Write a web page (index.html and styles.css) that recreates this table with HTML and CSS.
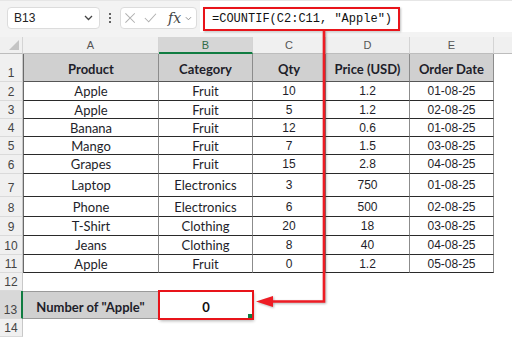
FILE: index.html
```html
<!DOCTYPE html>
<html>
<head>
<meta charset="utf-8">
<link rel="stylesheet" href="styles.css">
</head>
<body>
<div class="page">
  <div class="bar">
    <div class="namebox">
      <span class="ref">B13</span>
      <svg class="chev" width="9" height="6" viewBox="0 0 9 6"><path d="M1 1 L4.5 4.5 L8 1" fill="none" stroke="#444" stroke-width="1.3"/></svg>
    </div>
    <div class="dots"><i></i><i></i><i></i></div>
    <div class="fxbox">
      <svg class="xic" width="12" height="12" viewBox="0 0 12 12"><path d="M0.5 0.5 L11.5 11.5 M11.5 0.5 L0.5 11.5" stroke="#b0b0b0" stroke-width="1.2" fill="none"/></svg>
      <svg width="15" height="12" viewBox="0 0 15 12"><path d="M1 6 L5.5 10.5 L14 1" stroke="#b0b0b0" stroke-width="1.2" fill="none"/></svg>
      <span class="fx">fx</span>
      <svg class="chev2" width="8" height="5" viewBox="0 0 8 5"><path d="M1 1 L4 4 L7 1" fill="none" stroke="#888" stroke-width="1.1"/></svg>
    </div>
    <div class="finput"><div class="formula">=COUNTIF(C2:C11, "Apple")</div></div>
  </div>

  <div class="sheet">
    <div class="corner"></div>
    <div class="ch">A</div><div class="ch sel">B</div><div class="ch">C</div><div class="ch">D</div><div class="ch">E</div><div class="ch last"></div>

    <div class="rh">1</div>
    <div class="c h a">Product</div><div class="c h">Category</div><div class="c h">Qty</div><div class="c h">Price (USD)</div><div class="c h">Order Date</div><div class="e"></div>

    <div class="rh">2</div>
    <div class="c a">Apple</div><div class="c">Fruit</div><div class="c n">10</div><div class="c n">1.2</div><div class="c n">01-08-25</div><div class="e"></div>
    <div class="rh">3</div>
    <div class="c a">Apple</div><div class="c">Fruit</div><div class="c n">5</div><div class="c n">1.2</div><div class="c n">02-08-25</div><div class="e"></div>
    <div class="rh">4</div>
    <div class="c a">Banana</div><div class="c">Fruit</div><div class="c n">12</div><div class="c n">0.6</div><div class="c n">01-08-25</div><div class="e"></div>
    <div class="rh">5</div>
    <div class="c a">Mango</div><div class="c">Fruit</div><div class="c n">7</div><div class="c n">1.5</div><div class="c n">03-08-25</div><div class="e"></div>
    <div class="rh">6</div>
    <div class="c a">Grapes</div><div class="c">Fruit</div><div class="c n">15</div><div class="c n">2.8</div><div class="c n">04-08-25</div><div class="e"></div>
    <div class="rh">7</div>
    <div class="c a">Laptop</div><div class="c">Electronics</div><div class="c n">3</div><div class="c n">750</div><div class="c n">01-08-25</div><div class="e"></div>
    <div class="rh">8</div>
    <div class="c a">Phone</div><div class="c">Electronics</div><div class="c n">6</div><div class="c n">500</div><div class="c n">02-08-25</div><div class="e"></div>
    <div class="rh">9</div>
    <div class="c a">T-Shirt</div><div class="c">Clothing</div><div class="c n">20</div><div class="c n">18</div><div class="c n">03-08-25</div><div class="e"></div>
    <div class="rh">10</div>
    <div class="c a">Jeans</div><div class="c">Clothing</div><div class="c n">8</div><div class="c n">40</div><div class="c n">04-08-25</div><div class="e"></div>
    <div class="rh">11</div>
    <div class="c a">Apple</div><div class="c">Fruit</div><div class="c n">0</div><div class="c n">1.2</div><div class="c n">05-08-25</div><div class="e"></div>

    <div class="rh">12</div>
    <div class="e"></div><div class="e"></div><div class="e"></div><div class="e"></div><div class="e"></div><div class="e"></div>

    <div class="rh act">13</div>
    <div class="lbl">Number of "Apple"</div><div class="res">0<span class="handle"></span></div><div class="e"></div><div class="e"></div><div class="e"></div><div class="e"></div>

    <div class="rh">14</div>
    <div class="e"></div><div class="e"></div><div class="e"></div><div class="e"></div><div class="e"></div><div class="e"></div>
  </div>

  <svg class="arrow" width="512" height="338" viewBox="0 0 512 338">
    <polyline points="324,31 324,301.5 270,301.5" fill="none" stroke="#ee1c24" stroke-width="2.6"/>
    <polygon points="256,301.5 273,296 273,307" fill="#ee1c24"/>
  </svg>
</div>
</body>
</html>
```

FILE: styles.css
```css
* { box-sizing: border-box; }
html, body { margin: 0; padding: 0; background: #fff; }
body { width: 512px; height: 338px; overflow: hidden; font-family: "Liberation Sans", Arial, sans-serif; }
.page { position: relative; width: 512px; height: 338px; }

.bar {
  display: flex;
  align-items: flex-start;
  height: 37px;
  background: #f3f3f3;
  border-top: 1px solid #e6e6e6;
}
.namebox {
  margin: 6px 0 0 7px;
  width: 93px;
  height: 22px;
  background: #fff;
  border: 1px solid #dcdcdc;
  border-radius: 4px;
  display: flex;
  align-items: center;
  justify-content: space-between;
  padding: 0 6px 0 6px;
}
.ref { font-size: 12px; color: #222; }
.dots {
  width: 20px;
  height: 22px;
  margin-top: 6px;
  display: flex;
  flex-direction: column;
  align-items: center;
  justify-content: center;
  gap: 2px;
}
.dots i { display: block; width: 2px; height: 2px; background: #333; border-radius: 1px; }
.fxbox {
  margin-top: 6px;
  width: 77px;
  height: 22px;
  background: #fff;
  border: 1px solid #dcdcdc;
  border-radius: 4px;
  display: flex;
  align-items: center;
  padding: 0 4px 0 4px;
  gap: 6px;
}
.xic { margin-right: 3px; }
.fx {
  font-family: "DejaVu Serif", "Liberation Serif", serif;
  font-style: italic;
  font-size: 14px;
  color: #444;
  margin-left: 5px;
  line-height: 1;
}
.chev2 { margin-left: -2px; }
.finput {
  flex: 1;
  margin-left: 3px;
  height: 31px;
  background: #fff;
  padding: 6px 0 0 3px;
}
.formula {
  width: 197px;
  height: 24px;
  border: 2px solid #e8141a;
  box-shadow: 1px 1px 2px rgba(0,0,0,0.25);
  padding-left: 7px;
  font-family: "Liberation Mono", "DejaVu Sans Mono", monospace;
  font-size: 12px;
  line-height: 20px;
  color: #111;
  white-space: nowrap;
}

.sheet {
  display: grid;
  grid-template-columns: 23px 136px 94px 73px 84px 84px 18px;
  grid-template-rows: 17px 28px 19px 18px 18px 18px 19px 23px 20px 19px 19px 18px 18px 28px 18px;
}
.corner {
  background: #f0f0f0;
  border-right: 1px solid #d4d4d4;
  border-bottom: 1px solid #bdbdbd;
  position: relative;
}
.corner::after {
  content: "";
  position: absolute;
  right: 3px;
  bottom: 3px;
  border-left: 10px solid transparent;
  border-bottom: 10px solid #c4c4c4;
}
.ch {
  background: #f0f0f0;
  border-right: 1px solid #d4d4d4;
  border-bottom: 1px solid #bdbdbd;
  font-size: 11px;
  color: #555;
  display: flex;
  align-items: center;
  justify-content: center;
}
.ch.sel {
  background: #d6d6d6;
  border-bottom: 2px solid #107c41;
  color: #2f6b48;
}
.ch.last { border-right: none; }
.rh {
  background: #f0f0f0;
  border-right: 1px solid #c8c8c8;
  border-bottom: 1px solid #dadada;
  font-size: 12px;
  color: #444;
  display: flex;
  align-items: flex-end;
  justify-content: center;
  padding-bottom: 1px;
  line-height: 14px;
}
.rh.act {
  background: #d8d8d8;
  border-right: 2px solid #107c41;
}
.c {
  border-right: 1px solid #8c8c8c;
  border-bottom: 1px solid #2a2a2a;
  display: flex;
  align-items: center;
  justify-content: center;
  font-family: Lato, "Liberation Sans", sans-serif;
  font-size: 13px;
  color: #1e1e2a;
  white-space: nowrap;
}
.c.a { border-left: 1px solid #6a6a6a; }
.c.n { font-family: "Liberation Sans", Arial, sans-serif; font-size: 12px; }
.c.h {
  background: #d0d0d0;
  font-weight: 700;
  font-family: Lato, "Liberation Sans", sans-serif;
  font-size: 13px;
  border-bottom: 1px solid #555;
  padding-top: 2px;
}
.e { background: #fff; }
.lbl {
  background: #d0d0d0;
  border-top: 1px solid #9a9a9a;
  border-bottom: 1px solid #9a9a9a;
  border-right: 1px solid #9a9a9a;
  display: flex;
  align-items: center;
  justify-content: center;
  font-family: Lato, "Liberation Sans", sans-serif;
  font-weight: 700;
  font-size: 13px;
  color: #1e1e2a;
  padding-top: 3px;
}
.res {
  position: relative;
  background: #fff;
  outline: 2px solid #e8141a;
  outline-offset: -1px;
  box-shadow: 1px 2px 3px rgba(0,0,0,0.3);
  display: flex;
  align-items: center;
  justify-content: center;
  font-family: Lato, "Liberation Sans", sans-serif;
  font-weight: 700;
  font-size: 13px;
  color: #111;
  padding-top: 3px;
}
.handle {
  position: absolute;
  right: 1px;
  bottom: 1px;
  width: 4px;
  height: 4px;
  background: #107c41;
}
.arrow {
  position: absolute;
  left: 0;
  top: 0;
  pointer-events: none;
  filter: drop-shadow(1px 1px 1px rgba(0,0,0,0.3));
}
```
